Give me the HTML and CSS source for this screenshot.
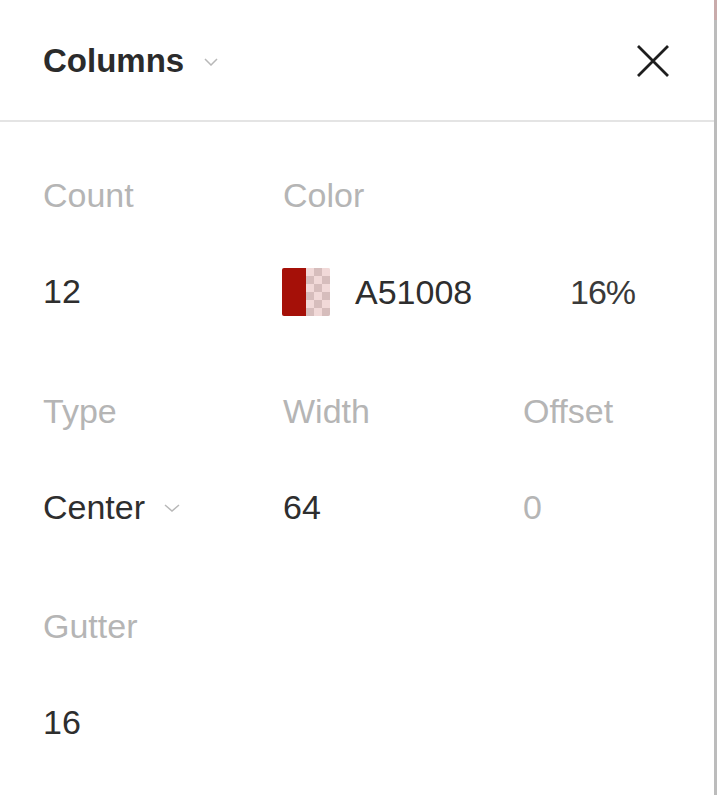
FILE: index.html
```html
<!DOCTYPE html>
<html>
<head>
<meta charset="utf-8">
<link rel="stylesheet" href="styles.css">
</head>
<body>
<div class="panel">
  <div class="header">
    <div class="title">
      <span>Columns</span>
      <svg class="chev" width="14" height="8" viewBox="0 0 14 8"><path d="M1 1 L7 7 L13 1" fill="none" stroke="#b8b8b8" stroke-width="1.5"/></svg>
    </div>
    <svg class="close" width="34" height="34" viewBox="0 0 34 34"><path d="M2 2 L32 32 M32 2 L2 32" stroke="#1e1e1e" stroke-width="2.8" fill="none"/></svg>
  </div>
  <div class="body">
    <div class="field">
      <div class="label">Count</div>
      <div class="value">12</div>
    </div>
    <div class="field wide">
      <div class="label">Color</div>
      <div class="value color-row">
        <span class="swatch"><span class="solid"></span><span class="checker"></span></span>
        <span class="hex">A51008</span>
        <span class="opacity">16%</span>
      </div>
    </div>
    <div class="field">
      <div class="label">Type</div>
      <div class="value select">
        <span>Center</span>
        <svg class="chev" width="16" height="8" viewBox="0 0 16 8"><path d="M1 1 L8 7 L15 1" fill="none" stroke="#b8b8b8" stroke-width="1.5"/></svg>
      </div>
    </div>
    <div class="field">
      <div class="label">Width</div>
      <div class="value">64</div>
    </div>
    <div class="field">
      <div class="label">Offset</div>
      <div class="value muted">0</div>
    </div>
    <div class="field">
      <div class="label">Gutter</div>
      <div class="value">16</div>
    </div>
  </div>
</div>
</body>
</html>
```
FILE: styles.css
```css
html, body {
  margin: 0;
  padding: 0;
  background: #ffffff;
}
body {
  font-family: "Liberation Sans", Arial, sans-serif;
  width: 717px;
  height: 795px;
  overflow: hidden;
}
.panel {
  width: 714px;
  height: 795px;
  border-right: 3px solid #bcbcbc;
  background: #ffffff;
  position: relative;
}
.panel::after {
  content: "";
  position: absolute;
  top: 0;
  right: -3px;
  width: 3px;
  height: 20px;
  background: #c9abab;
}
.header {
  height: 118px;
  padding: 2px 44px 0 43px;
  border-bottom: 2px solid #e4e4e4;
  display: flex;
  align-items: center;
  justify-content: space-between;
}
.title {
  display: flex;
  align-items: center;
  gap: 20px;
  font-size: 33px;
  font-weight: bold;
  color: #2b2b2b;
}
.title .chev {
  margin-top: 2px;
}
.close {
  display: block;
}
.body {
  padding: 49px 0 0 43px;
  display: grid;
  grid-template-columns: 240px 240px 1fr;
  row-gap: 71px;
}
.field {
  display: flex;
  flex-direction: column;
  gap: 48px;
  min-width: 0;
}
.field.wide {
  grid-column: span 2;
}
.label {
  font-size: 34px;
  line-height: 48px;
  color: #b5b5b5;
}
.value {
  font-size: 34px;
  line-height: 48px;
  color: #2e2e2e;
  height: 48px;
}
.value.muted {
  color: #b5b5b5;
}
.color-row {
  display: flex;
  align-items: center;
  margin-left: -1px;
  margin-top: 1px;
}
.swatch {
  display: flex;
  width: 48px;
  height: 48px;
  border-radius: 2px;
  overflow: hidden;
  margin-right: 25px;
}
.solid {
  width: 24px;
  height: 48px;
  background: #a51008;
}
.checker {
  width: 24px;
  height: 48px;
  background-color: #f1d9d8;
  background-image: conic-gradient(#d6bdbc 25%, #f1d9d8 0 50%, #d6bdbc 0 75%, #f1d9d8 0);
  background-size: 16px 16px;
}
.hex {
  width: 215px;
}
.opacity {
  color: #3a3a3a;
  letter-spacing: -1px;
}
.select {
  display: flex;
  align-items: center;
  gap: 19px;
}
.select .chev {
  margin-top: 2px;
}
```
